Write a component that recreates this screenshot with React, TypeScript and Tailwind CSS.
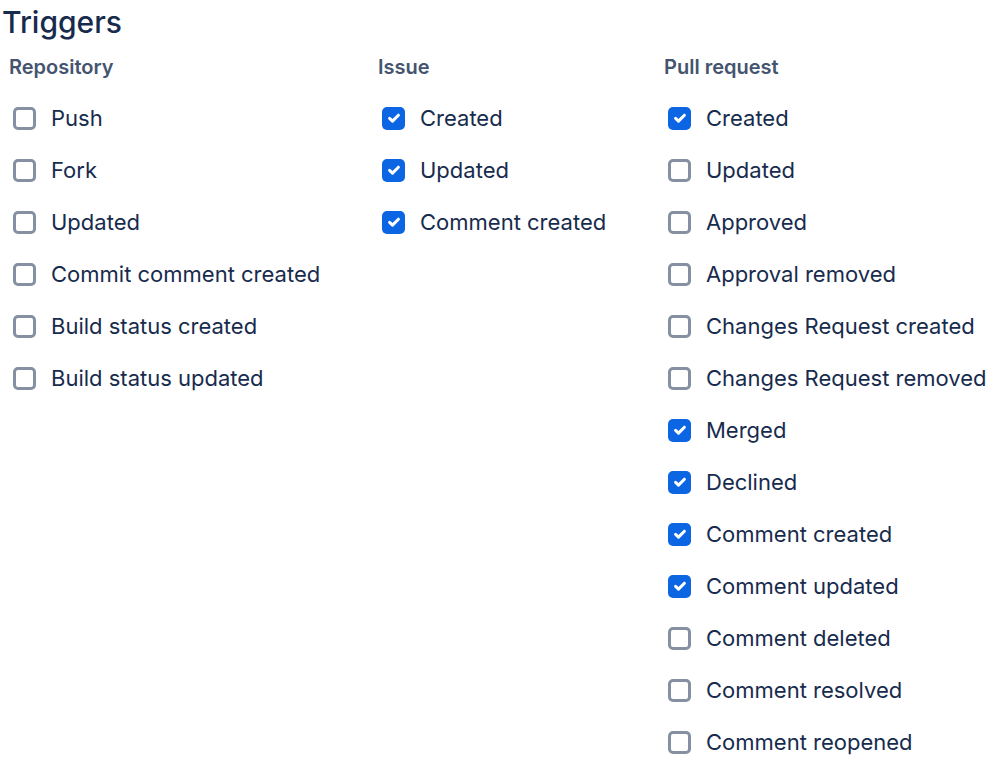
import React from 'react';

interface Trigger {
  label: string;
  checked: boolean;
}

interface Group {
  title: string;
  width: string;
  items: Trigger[];
}

const groups: Group[] = [
  {
    title: 'Repository',
    width: 'w-[369px]',
    items: [
      { label: 'Push', checked: false },
      { label: 'Fork', checked: false },
      { label: 'Updated', checked: false },
      { label: 'Commit comment created', checked: false },
      { label: 'Build status created', checked: false },
      { label: 'Build status updated', checked: false },
    ],
  },
  {
    title: 'Issue',
    width: 'w-[286px]',
    items: [
      { label: 'Created', checked: true },
      { label: 'Updated', checked: true },
      { label: 'Comment created', checked: true },
    ],
  },
  {
    title: 'Pull request',
    width: 'w-[335px]',
    items: [
      { label: 'Created', checked: true },
      { label: 'Updated', checked: false },
      { label: 'Approved', checked: false },
      { label: 'Approval removed', checked: false },
      { label: 'Changes Request created', checked: false },
      { label: 'Changes Request removed', checked: false },
      { label: 'Merged', checked: true },
      { label: 'Declined', checked: true },
      { label: 'Comment created', checked: true },
      { label: 'Comment updated', checked: true },
      { label: 'Comment deleted', checked: false },
      { label: 'Comment resolved', checked: false },
      { label: 'Comment reopened', checked: false },
    ],
  },
];

const Box: React.FC<{ checked: boolean }> = ({ checked }) =>
  checked ? (
    <span className="flex h-[23px] w-[23px] shrink-0 items-center justify-center rounded-[5px] bg-[#0c66e4]">
      <svg width="16" height="16" viewBox="0 0 16 16" fill="none">
        <path d="M3.6 8.3l2.9 2.8L12.4 5.2" stroke="white" strokeWidth="3" strokeLinecap="round" strokeLinejoin="round" />
      </svg>
    </span>
  ) : (
    <span className="h-[23px] w-[23px] shrink-0 rounded-[5px] border-[3px] border-[#8590a2] bg-white" />
  );

const App: React.FC = () => {
  const [state, setState] = React.useState(groups);

  const toggle = (g: number, i: number) => {
    setState((prev) =>
      prev.map((grp, gi) =>
        gi !== g ? grp : { ...grp, items: grp.items.map((it, ii) => (ii === i ? { ...it, checked: !it.checked } : it)) }
      )
    );
  };

  return (
    <div className="min-h-screen bg-white pl-[9px] text-[#172b4d]" style={{ fontFamily: 'Inter, "Noto Sans", sans-serif' }}>
      <h1 className="-ml-[7px] pt-[3px] text-[30px] font-medium leading-[38px]">Triggers</h1>
      <div className="mt-[13px] flex">
        {state.map((g, gi) => (
          <div key={g.title} className={g.width}>
            <div className="text-[20px] font-semibold leading-[26px] text-[#44546f]">{g.title}</div>
            <div className="mt-[12px] flex flex-col">
              {g.items.map((it, ii) => (
                <label
                  key={it.label}
                  onClick={() => toggle(gi, ii)}
                  className="flex h-[52px] cursor-pointer items-center gap-[15px] pl-[4px]"
                >
                  <Box checked={it.checked} />
                  <span className="text-[22px] leading-[28px]">{it.label}</span>
                </label>
              ))}
            </div>
          </div>
        ))}
      </div>
    </div>
  );
};

export default App;
